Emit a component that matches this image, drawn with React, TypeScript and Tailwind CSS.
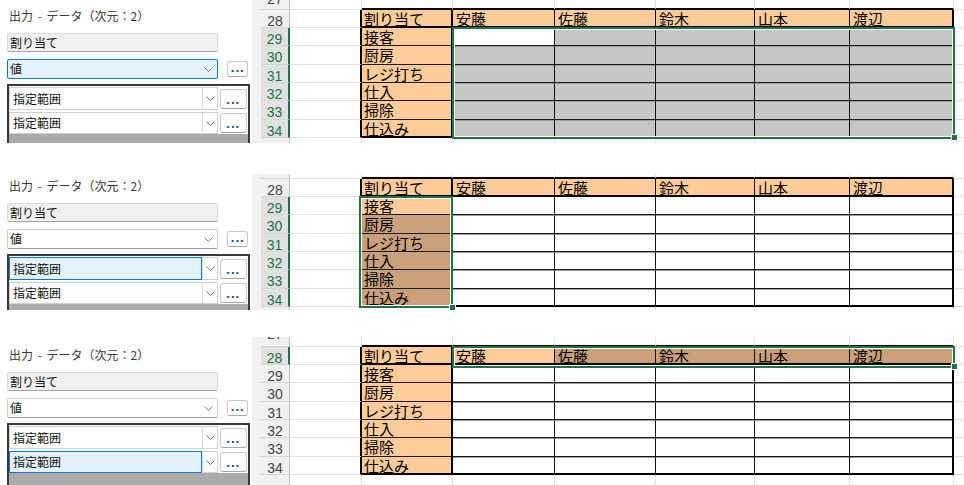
import React from 'react';

type Mode = 1 | 2 | 3;

const NAMES = ['安藤', '佐藤', '鈴木', '山本', '渡辺'];
const TASKS = ['接客', '厨房', 'レジ打ち', '仕入', '掃除', '仕込み'];
const DATA_W = ['w-[102px]', 'w-[101px]', 'w-[99px]', 'w-[95px]', 'w-[104px]'];
const ROW_H = ['h-[18px]', 'h-[18px]', 'h-[19px]', 'h-[18px]', 'h-[18px]', 'h-[19px]', 'h-[18px]'];

const CJK = "font-['Noto_Sans_CJK_JP',sans-serif]";
const CELL = "font-['Noto_Sans_CJK_JP',sans-serif] text-[15px] leading-[15px] text-black whitespace-nowrap";
const NUM = "font-['Liberation_Sans',sans-serif] text-[14px] leading-[14px]";

function Strip() {
  return <div className="w-[9px] shrink-0 h-full bg-[#f1f1f1]" />;
}

function Chevron() {
  return (
    <svg width="9" height="5" viewBox="0 0 9 5" className="block">
      <path d="M0.5 0.5 L4.5 4.5 L8.5 0.5" fill="none" stroke="#707070" strokeWidth="1" />
    </svg>
  );
}

function Dots({ cls }: { cls: string }) {
  return (
    <div
      className={`${cls} shrink-0 bg-white border border-[#c8c8c8] border-b-[#a6a6a6] rounded-[3px] flex items-end justify-center pb-[3px]`}
    >
      <span className="font-['DejaVu_Sans',sans-serif] text-[11px] leading-[8px] font-bold text-[#1f4fa0] tracking-[0.5px]">
        ...
      </span>
    </div>
  );
}

function ListRow({ focused, h }: { focused: boolean; h: string }) {
  return (
    <div className={`flex ${h}`}>
      <div
        className={`w-[193px] h-full border ${
          focused ? 'border-[#0078d7] bg-[#e5f1fb]' : 'border-[#d0d0d0] border-r-0 bg-white'
        } flex items-center pl-[3px] ${CJK} text-[12px] text-[#111]`}
      >
        指定範囲
      </div>
      <div className="w-[16px] h-full border border-[#d0d0d0] border-l-[#dcdcdc] bg-white flex items-center justify-center">
        <Chevron />
      </div>
      <div className="w-[30px] h-full flex items-center justify-center">
        <Dots cls="w-[27px] h-[20px]" />
      </div>
    </div>
  );
}

function LeftPanel({ mode, pt }: { mode: Mode; pt: string }) {
  const valFocused = mode === 1;
  return (
    <div className={`w-[252px] shrink-0 h-full flex flex-col pl-[7px] bg-white ${pt}`}>
      <div
        className={`h-[16px] pl-[2px] ${CJK} text-[12px] leading-[16px] text-[#3a3a3a] whitespace-nowrap [word-spacing:2px]`}
      >
        出力 - データ（次元：2）
      </div>
      <div
        className={`mt-[9px] h-[19px] w-[211px] shrink-0 bg-[#f0f0f0] border border-[#dadada] border-b-[#a5a5a5] rounded-[2px] pl-[2px] ${CJK} text-[12px] leading-[17px] text-[#111]`}
      >
        割り当て
      </div>
      <div className="mt-[7px] h-[20px] shrink-0 flex items-center">
        <div
          className={`w-[211px] h-[20px] border rounded-[2px] flex items-center justify-between pl-[2px] pr-[4px] ${
            valFocused ? 'border-[#0078d7] bg-[#e5f1fb]' : 'border-[#d0d0d0] border-b-[#9a9a9a] bg-white'
          }`}
        >
          <span className={`${CJK} text-[12px] leading-[16px] text-[#111]`}>値</span>
          <Chevron />
        </div>
        <div className="ml-[9px]">
          <Dots cls="w-[21px] h-[16px]" />
        </div>
      </div>
      <div className="mt-[5px] w-[243px] flex-1 min-h-0 border-2 border-b-0 border-[#3a3a3a] bg-[#ababab] flex flex-col overflow-hidden">
        <div className="bg-white pt-[1px] flex flex-col gap-[2px] shrink-0">
          <ListRow focused={mode === 2} h="h-[23px]" />
          <ListRow focused={mode === 3} h="h-[22px]" />
        </div>
      </div>
    </div>
  );
}

function EdgeRow({ h, top, label, shift }: { h: string; top: boolean; label: boolean; shift: string }) {
  const tb = top ? 'border-b-2 border-b-black' : '';
  return (
    <div className={`flex ${h} overflow-hidden shrink-0`}>
      <Strip />
      <div
        className={`w-[29px] shrink-0 bg-[#f0f0f0] border-r border-r-[#c3c3c3] overflow-hidden ${
          top ? 'border-b border-b-[#d6d6d6]' : ''
        }`}
      >
        {label && (
          <div className={`h-[18px] ${shift} flex justify-center items-start pt-[4px] ${NUM} text-[#444]`}>27</div>
        )}
      </div>
      <div className={`w-[72px] shrink-0 border-r border-r-[#e1e1e1] ${top ? 'border-b border-b-[#e1e1e1]' : ''}`} />
      <div className={`w-[91px] shrink-0 border-r border-r-[#e1e1e1] ${tb}`} />
      {DATA_W.map((w, i) => (
        <div key={i} className={`${w} shrink-0 border-r border-r-[#e1e1e1] ${tb}`} />
      ))}
      <div className={`flex-1 ${top ? 'border-b border-b-[#e1e1e1]' : ''}`} />
    </div>
  );
}

function TableRow({ r, mode }: { r: number; mode: Mode }) {
  const hdrSel = mode === 3 ? r === 0 : r >= 1;
  const bottom = r === 0 || r === 6 ? 'border-b-2 border-b-black' : 'border-b border-b-[#1a1a1a]';
  const col0Sel = mode === 2 && r >= 2;
  const col0Bg = col0Sel ? 'bg-[#c9a07a]' : 'bg-[#ffcc99]';
  return (
    <div className={`flex ${ROW_H[r]} shrink-0`}>
      <Strip />
      <div
        className={`w-[29px] shrink-0 border-b border-b-[#d6d6d6] flex justify-center items-start pt-[4px] ${NUM} ${
          hdrSel
            ? 'bg-[#e1e1e1] text-[#217346] border-r-2 border-r-[#217346]'
            : 'bg-[#f0f0f0] text-[#444] border-r border-r-[#c3c3c3]'
        }`}
      >
        {28 + r}
      </div>
      <div className="w-[72px] shrink-0 border-b border-b-[#e1e1e1] border-r-2 border-r-black" />
      <div className={`w-[91px] shrink-0 border-r-2 border-r-black ${bottom} ${col0Bg} flex items-start pt-[1px] pl-[2px] ${CELL}`}>
        {r === 0 ? '割り当て' : TASKS[r - 1]}
      </div>
      {NAMES.map((n, c) => {
        let bg: string;
        if (r === 0) bg = mode === 3 && c >= 1 ? 'bg-[#c9a07a]' : 'bg-[#ffcc99]';
        else bg = mode === 1 && !(r === 1 && c === 0) ? 'bg-[#c6c6c6]' : 'bg-white';
        const right = c === 4 ? 'border-r-2 border-r-black' : 'border-r border-r-[#111]';
        const inset = r >= 2 ? 'shadow-[inset_0_1px_0_#a0a0a0]' : '';
        return (
          <div
            key={n}
            className={`${DATA_W[c]} shrink-0 ${right} ${bottom} ${bg} ${inset} flex items-start pt-[1px] pl-[3px] ${CELL}`}
          >
            {r === 0 ? n : ''}
          </div>
        );
      })}
      <div className="flex-1 border-b border-b-[#e1e1e1]" />
    </div>
  );
}

type PanelProps = {
  mode: Mode;
  h: string;
  pt: string;
  topH: string;
  botH: string;
  label: boolean;
  shift: string;
  sel: string;
  handle: string;
};

function Panel(p: PanelProps) {
  return (
    <div className={`flex ${p.h} shrink-0`}>
      <LeftPanel mode={p.mode} pt={p.pt} />
      <div className="relative flex-1 h-full flex flex-col overflow-hidden bg-white">
        <EdgeRow h={p.topH} top={true} label={p.label} shift={p.shift} />
        {[0, 1, 2, 3, 4, 5, 6].map((r) => (
          <TableRow key={r} r={r} mode={p.mode} />
        ))}
        <EdgeRow h={p.botH} top={false} label={false} shift="" />
        <div
          className={`absolute ${p.sel} border-2 border-[#217346] shadow-[inset_0_0_0_1px_#ffffff] pointer-events-none`}
        />
        <div className={`absolute ${p.handle} w-[7px] h-[7px] bg-[#217346] border border-white`} />
      </div>
    </div>
  );
}

export default function App() {
  return (
    <div className="w-[964px] h-[485px] bg-white overflow-hidden flex flex-col">
      <Panel
        mode={1}
        h="h-[143px]"
        pt="pt-[8px]"
        topH="h-[10px]"
        botH="h-[5px]"
        label={true}
        shift="mt-[-12px]"
        sel="left-[200px] top-[27px] w-[503px] h-[112px]"
        handle="left-[699px] top-[134px]"
      />
      <div className="h-[31px] shrink-0" />
      <Panel
        mode={2}
        h="h-[136px]"
        pt="pt-[4px]"
        topH="h-[5px]"
        botH="h-[3px]"
        label={false}
        shift=""
        sel="left-[107px] top-[22px] w-[94px] h-[112px]"
        handle="left-[197px] top-[130px]"
      />
      <div className="h-[27px] shrink-0" />
      <Panel
        mode={3}
        h="h-[148px]"
        pt="pt-[10px]"
        topH="h-[10px]"
        botH="h-[10px]"
        label={true}
        shift="mt-[-14px]"
        sel="left-[200px] top-[9px] w-[503px] h-[22px]"
        handle="left-[699px] top-[26px]"
      />
    </div>
  );
}
